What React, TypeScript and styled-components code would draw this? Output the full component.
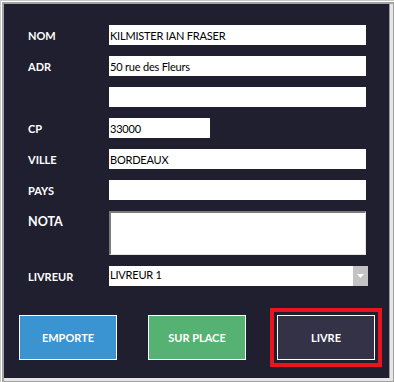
import styled, { createGlobalStyle } from 'styled-components';

const GlobalStyle = createGlobalStyle`
    html, body {
        margin: 0;
        padding: 0;
        background: #ffffff;
    }
    #root {
        width: 394px;
        height: 382px;
    }
`;

const Window = styled.div`
    box-sizing: border-box;
    width: 394px;
    height: 382px;
    background: #201f2f;
    box-shadow: inset 1px 1px 0 #c8c8c8, inset 2px 2px 0 #ffffff,
        inset 4px 4px 0 #a3a3a3, inset -1px -1px 0 #a0a0a0,
        inset -4px -4px 0 #e6e6e6, inset -5px -4px 0 #9a9a9a;
    padding: 25px 0 0 19px;
    font-family: Lato, 'Liberation Sans', sans-serif;
`;

const Form = styled.div`
    display: grid;
    grid-template-columns: 81px 259px;
    row-gap: 11px;
    padding-left: 9px;
`;

const Label = styled.div<{ $top?: boolean; $big?: boolean }>`
    color: #ffffff;
    font-weight: 700;
    font-size: ${({ $big }) => ($big ? '12.5px' : '11px')};
    display: flex;
    align-items: ${({ $top }) => ($top ? 'flex-start' : 'center')};
    padding-top: ${({ $top }) => ($top ? '3px' : '0')};
    height: ${({ $top }) => ($top ? 'auto' : '20px')};
`;

const Field = styled.input<{ $width?: number }>`
    box-sizing: border-box;
    width: ${({ $width }) => ($width ? `${$width}px` : '257px')};
    height: 20px;
    border: none;
    outline: none;
    margin: 0;
    padding: 0 1px;
    background: #ffffff;
    color: #000000;
    font-family: Lato, 'Liberation Sans', sans-serif;
    font-size: 11px;
    letter-spacing: -0.2px;
`;

const Note = styled.textarea`
    box-sizing: border-box;
    width: 257px;
    height: 44px;
    margin: 0;
    padding: 2px;
    resize: none;
    outline: none;
    background: #ffffff;
    border-style: solid;
    border-width: 2px 1px 1px 2px;
    border-color: #7a7a7a #e3e3e3 #e3e3e3 #7a7a7a;
    font-family: Lato, 'Liberation Sans', sans-serif;
    font-size: 11px;
`;

const Select = styled.div`
    box-sizing: border-box;
    width: 259px;
    height: 20px;
    background: #ffffff;
    display: flex;
    align-items: flex-start;
    font-size: 11px;
    letter-spacing: -0.2px;
    color: #000000;
`;

const SelectText = styled.span`
    flex: 1;
    padding: 2px 1px 0;
`;

const Arrow = styled.div`
    width: 15px;
    height: 20px;
    background: #c3c3c3;
    display: flex;
    align-items: center;
    justify-content: center;
`;

const Buttons = styled.div`
    display: flex;
    gap: 31px;
    margin-top: 29px;
`;

const Button = styled.button<{ $bg: string; $active?: boolean }>`
    box-sizing: border-box;
    width: 98px;
    height: 45px;
    margin: 0;
    padding: 0;
    background: ${({ $bg }) => $bg};
    border: 1px solid #ffffff;
    color: #ffffff;
    font-family: Lato, 'Liberation Sans', sans-serif;
    font-weight: 700;
    font-size: 11px;
    outline: ${({ $active }) => ($active ? '4px solid #e8141f' : 'none')};
    outline-offset: 3px;
`;

export default function App() {
    return (
        <>
            <GlobalStyle />
            <Window>
                <Form>
                    <Label>NOM</Label>
                    <Field readOnly value="KILMISTER IAN FRASER" />
                    <Label>ADR</Label>
                    <Field readOnly value="50 rue des Fleurs" />
                    <Label />
                    <Field readOnly value="" />
                    <Label>CP</Label>
                    <Field readOnly value="33000" $width={101} />
                    <Label>VILLE</Label>
                    <Field readOnly value="BORDEAUX" />
                    <Label>PAYS</Label>
                    <Field readOnly value="" />
                    <Label $top $big>
                        NOTA
                    </Label>
                    <Note readOnly value="" />
                    <Label>LIVREUR</Label>
                    <Select>
                        <SelectText>LIVREUR 1</SelectText>
                        <Arrow>
                            <svg width="7" height="4" viewBox="0 0 7 4">
                                <path d="M0 0h7L3.5 4z" fill="#ffffff" />
                            </svg>
                        </Arrow>
                    </Select>
                </Form>
                <Buttons>
                    <Button $bg="#3a94d1">EMPORTE</Button>
                    <Button $bg="#55b273">SUR PLACE</Button>
                    <Button $bg="#333247" $active>
                        LIVRE
                    </Button>
                </Buttons>
            </Window>
        </>
    );
}
